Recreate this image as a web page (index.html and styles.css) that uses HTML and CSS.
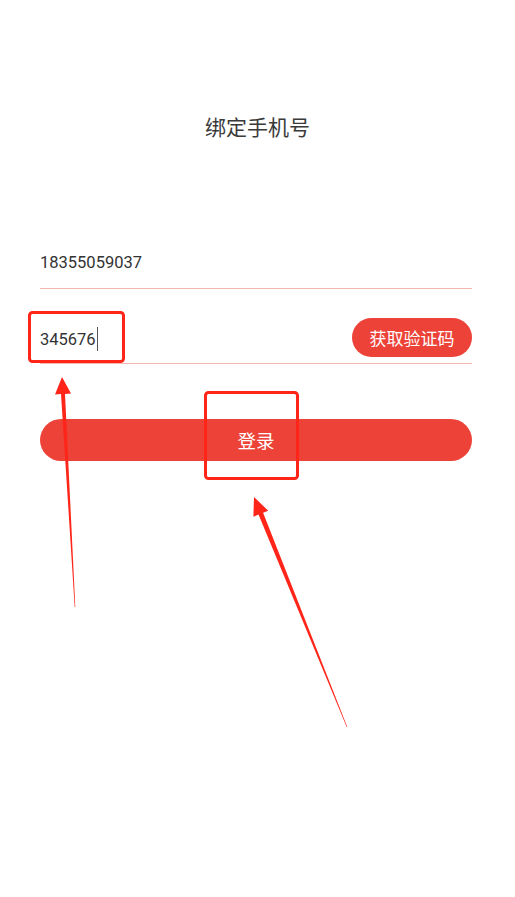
FILE: index.html
```html
<!DOCTYPE html>
<html lang="zh-CN">
<head>
<meta charset="utf-8">
<title>绑定手机号</title>
<link rel="stylesheet" href="styles.css">
</head>
<body>
<div class="page">
  <h1 class="title">绑定手机号</h1>
  <form class="form">
    <div class="field field-phone">
      <span class="value">18355059037</span>
    </div>
    <div class="field field-code">
      <span class="value">345676<span class="caret"></span></span>
      <button type="button" class="code-btn">获取验证码</button>
    </div>
    <button type="button" class="login-btn">登录</button>
  </form>
  <svg class="annotations" width="515" height="897" viewBox="0 0 515 897" xmlns="http://www.w3.org/2000/svg">
    <rect x="29.5" y="312.5" width="94" height="49" rx="3" fill="none" stroke="#ff2519" stroke-width="3"/>
    <rect x="205.5" y="392.5" width="92" height="86" rx="3" fill="none" stroke="#ff2519" stroke-width="3"/>
    <polygon points="62,377 71,393.6 65,393.9 75.3,607 74.7,607 61,394.1 55,394.4" fill="#ff2519"/>
    <polygon points="254,497 268.2,510.7 263.1,512.8 347.3,727 346.7,727 258.5,514.6 253.4,516.7" fill="#ff2519"/>
  </svg>
</div>
</body>
</html>
```
FILE: styles.css
```css
html, body {
  margin: 0;
  padding: 0;
  background: #ffffff;
}

body {
  font-family: "Roboto", "Noto Sans CJK SC", sans-serif;
  color: #333333;
}

.page {
  position: relative;
  width: 515px;
  height: 897px;
  box-sizing: border-box;
  padding: 112px 43px 0 40px;
}

.title {
  margin: 0;
  font-family: "Noto Sans CJK SC", sans-serif;
  font-size: 21px;
  line-height: 28px;
  font-weight: 400;
  text-align: center;
  color: #3a3a3a;
  padding-left: 3px;
}

.form {
  margin: 96px 0 0;
  display: flex;
  flex-direction: column;
}

.field {
  display: flex;
  align-items: center;
  border-bottom: 1px solid #f3b9b1;
}

.field-phone {
  height: 52px;
}

.field-code {
  padding: 29px 0 6px;
  height: 39px;
  justify-content: space-between;
}

.value {
  font-size: 16.5px;
  color: #333333;
  display: inline-flex;
  align-items: center;
}

.field-code .value {
  padding-top: 3px;
}

.caret {
  display: inline-block;
  width: 1px;
  height: 24px;
  background: #555555;
  margin-left: 1px;
}

.code-btn {
  height: 39px;
  width: 120px;
  border: none;
  border-radius: 20px;
  background: #ec4238;
  color: #ffffff;
  font-family: "Noto Sans CJK SC", sans-serif;
  font-size: 17px;
  padding: 0;
}

.login-btn {
  margin-top: 55px;
  height: 42px;
  border: none;
  border-radius: 21px;
  background: #ec4238;
  color: #ffffff;
  font-family: "Noto Sans CJK SC", sans-serif;
  font-size: 18.5px;
  padding: 0;
}

.annotations {
  position: absolute;
  left: 0;
  top: 0;
  pointer-events: none;
}
```
